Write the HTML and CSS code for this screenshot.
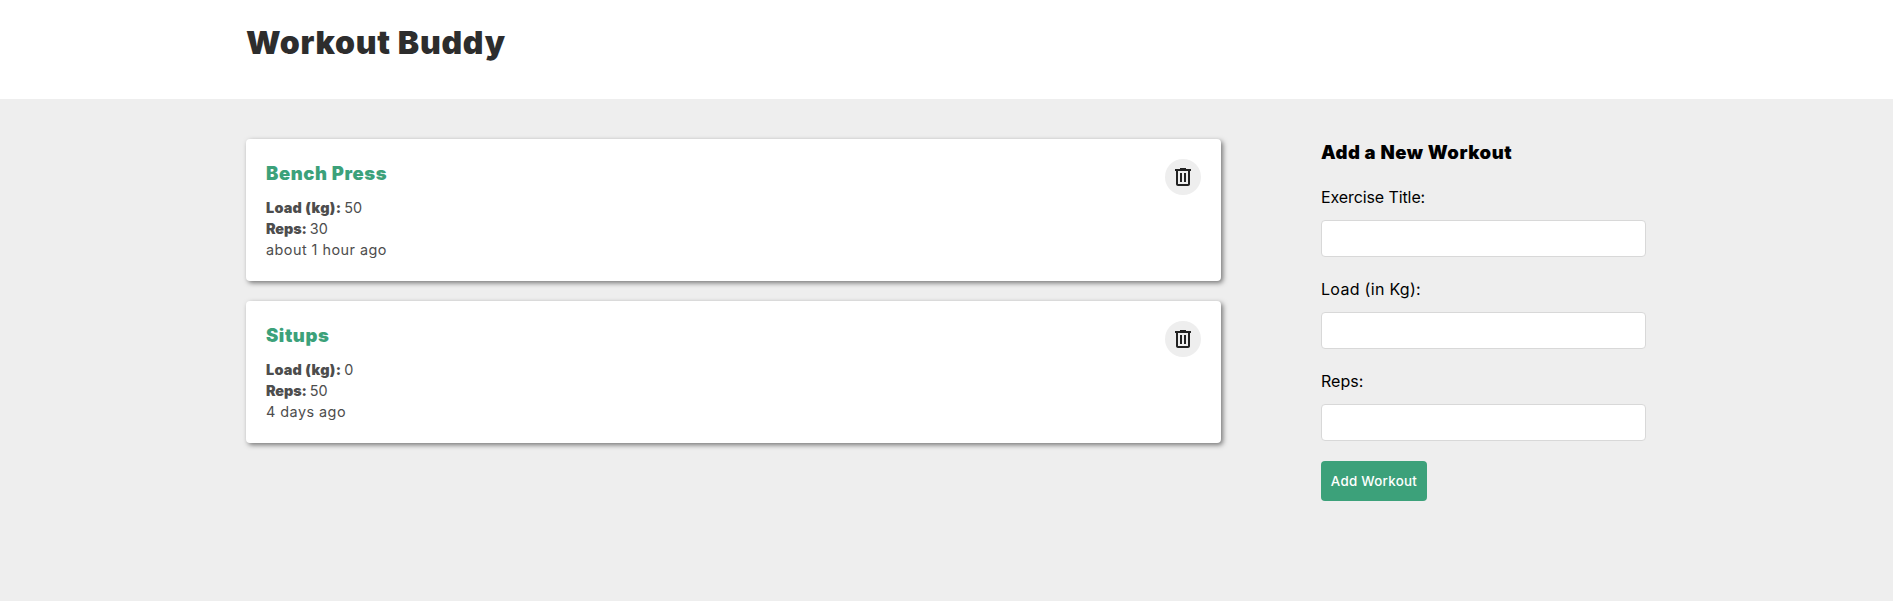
FILE: index.html
```html
<!DOCTYPE html>
<html lang="en">
<head>
<meta charset="utf-8">
<title>Workout Buddy</title>
<link rel="stylesheet" href="styles.css">
</head>
<body>
<header class="site-header"><div class="container"><h1 class="brand">Workout Buddy</h1></div></header>
<main class="home container">
  <section class="workouts">
    <article class="card">
      <div class="details">
        <h4 class="card-title">Bench Press</h4>
        <p class="meta"><strong>Load (kg):</strong><span class="value">50</span></p>
        <p class="meta"><strong class="reps">Reps:</strong><span class="value">30</span></p>
        <p class="meta"><span class="age">about 1 hour ago</span></p>
      </div>
      <button class="delete" aria-label="Delete"><svg width="24" height="24" viewBox="0 0 24 24"><path fill="#222" fill-rule="evenodd" d="M7 21c-1.100 0-2-.9-2-2V6H4V4h5V3h6v1h5v2h-1v13c0 1.100-.9 2-2 2ZM17 6H7v13h10ZM9 8h2v9H9ZM13 8h2v9h-2Z"/></svg></button>
    </article>
    <article class="card">
      <div class="details">
        <h4 class="card-title">Situps</h4>
        <p class="meta"><strong>Load (kg):</strong><span class="value">0</span></p>
        <p class="meta"><strong class="reps">Reps:</strong><span class="value">50</span></p>
        <p class="meta"><span class="age">4 days ago</span></p>
      </div>
      <button class="delete" aria-label="Delete"><svg width="24" height="24" viewBox="0 0 24 24"><path fill="#222" fill-rule="evenodd" d="M7 21c-1.100 0-2-.9-2-2V6H4V4h5V3h6v1h5v2h-1v13c0 1.100-.9 2-2 2ZM17 6H7v13h10ZM9 8h2v9H9ZM13 8h2v9h-2Z"/></svg></button>
    </article>
  </section>
  <form class="create">
    <h3 class="form-title">Add a New Workout</h3>
    <label class="label label-title" for="title">Exercise Title:</label>
    <input class="input" id="title" type="text">
    <label class="label label-load" for="load">Load (in Kg):</label>
    <input class="input" id="load" type="number">
    <label class="label" for="reps">Reps:</label>
    <input class="input" id="reps" type="number">
    <button class="submit" type="button">Add Workout</button>
  </form>
</main>
</body>
</html>
```
FILE: styles.css
```css
* { box-sizing: border-box; }
body { margin: 0; background: #eee; font-family: Inter, "Open Sans", sans-serif; color: #000; }
h1, h3, h4, p { margin: 0; }
.container { width: 1400px; margin: 0 0 0 246px; }
.site-header { background: #fff; height: 99px; padding-top: 19px; }
.brand { font-size: 32px; line-height: 48px; font-weight: 900; letter-spacing: .72px; color: #2d2d2d; }
.home { display: grid; grid-template-columns: 3fr 1fr; gap: 100px; padding-top: 40px; }
.workouts { display: flex; flex-direction: column; gap: 20px; align-self: start; }
.card { display: flex; justify-content: space-between; height: 142px; padding: 20px; background: #fff; border-radius: 4px; box-shadow: 2px 2px 5px rgba(0, 0, 0, .5); }
.card-title { font-size: 18.5px; line-height: 28px; margin-bottom: 10px; font-weight: 900; letter-spacing: .55px; color: #3ca17a; }
.meta { font-size: 14.4px; line-height: 21px; color: #4d4d4d; }
.meta strong { font-weight: 900; letter-spacing: .25px; }
.meta .reps { letter-spacing: -.1px; }
.value { margin-left: 3px; }
.age { letter-spacing: .47px; }
.delete { display: flex; align-items: center; justify-content: center; width: 36px; height: 36px; padding: 0; border: 0; border-radius: 50%; background: #eee; }
.create { display: flex; flex-direction: column; align-items: flex-start; }
.form-title { font-size: 18.5px; line-height: 26px; font-weight: 900; letter-spacing: .53px; margin-bottom: 20px; }
.label { font-size: 16px; line-height: 24px; margin-bottom: 11px; }
.label-title { letter-spacing: -.1px; }
.label-load { letter-spacing: .3px; }
.input { width: 100%; height: 37px; margin: 0 0 20px; padding: 10px; border: 1px solid #d8d8d8; border-radius: 4px; background: #fff; }
.submit { width: 106px; height: 40px; padding: 0; border: 0; border-radius: 4px; background: #3ca17a; color: #fff; font: 500 13.3px/40px Inter, sans-serif; letter-spacing: .3px; white-space: nowrap; }
```
